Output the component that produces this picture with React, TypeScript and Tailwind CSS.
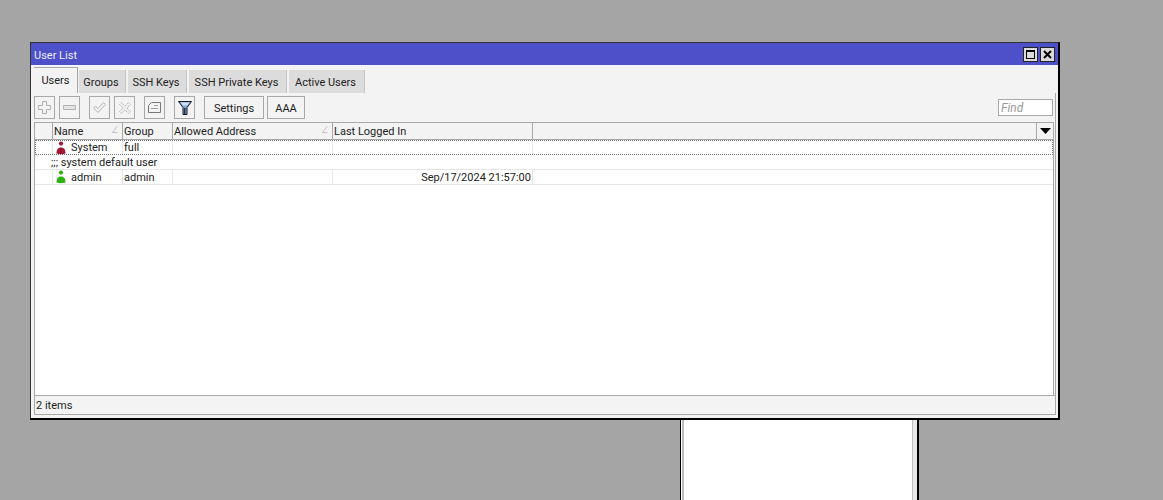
import React from "react";

const font = "font-['Roboto','Noto_Sans',sans-serif]";

const tabs = [
  { label: "Users", width: "w-[44px]", active: true },
  { label: "Groups", width: "w-[47px]" },
  { label: "SSH Keys", width: "w-[59px]" },
  { label: "SSH Private Keys", width: "w-[98px]" },
  { label: "Active Users", width: "w-[76px]" },
];

const UserIcon = ({ color }: { color: string }) => (
  <svg width="10" height="14" viewBox="0 0 10 14" className="shrink-0">
    <circle cx="5" cy="2.6" r="2.1" fill={color} />
    <path d="M0.5 12.5 C0.5 8 2.5 6.5 5 6.5 C7.5 6.5 9.5 8 9.5 12.5 Q5 14 0.5 12.5 Z" fill={color} />
  </svg>
);

const PlusIcon = () => (
  <svg width="13" height="13" viewBox="0 0 13 13" fill="#f3f3f3" stroke="#b0b0b0">
    <path d="M4.5 0.5h4v4h4v4h-4v4h-4v-4h-4v-4h4z" />
  </svg>
);

const MinusIcon = () => (
  <svg width="13" height="5" viewBox="0 0 13 5" fill="#e4e4e4" stroke="#b0b0b0">
    <path d="M0.5 0.5h12v4h-12z" />
  </svg>
);

const CheckIcon = () => (
  <svg width="13" height="11" viewBox="0 0 13 11" fill="#f3f3f3" stroke="#b4b4b4">
    <path d="M0.5 6l2-2 2.5 2.5 5.5-6 2 2-7.5 8z" />
  </svg>
);

const CrossIcon = () => (
  <svg width="12" height="12" viewBox="0 0 12 12" fill="#ededed" stroke="#b4b4b4" strokeDasharray="1.5 1">
    <path d="M2.5 0.5l3.5 3.5 3.5-3.5 2 2-3.5 3.5 3.5 3.5-2 2-3.5-3.5-3.5 3.5-2-2 3.5-3.5-3.5-3.5z" />
  </svg>
);

const NoteIcon = () => (
  <svg width="13" height="11" viewBox="0 0 13 11" fill="#f3f3f3" stroke="#777">
    <path d="M3.5 0.5h9v10h-12v-7z" />
    <path d="M6 3.5h4M3 6.5h7" stroke="#a0a0a0" />
  </svg>
);

const FilterIcon = () => (
  <svg width="14" height="14" viewBox="0 0 14 14">
    <path d="M0.5 0.5h13l-4.5 6v7h-4v-7z" fill="#7fa6d8" stroke="#1a1a2a" />
    <path d="M2.5 1.5h9l-2.5 3h-4z" fill="#cfe0f4" />
    <path d="M6 7h1.5v6h-1.5z" fill="#28334a" />
  </svg>
);

const iconButtons = [
  { icon: <PlusIcon />, cls: "" },
  { icon: <MinusIcon />, cls: "ml-[4px]" },
  { icon: <CheckIcon />, cls: "ml-[9px]" },
  { icon: <CrossIcon />, cls: "ml-[4px]" },
  { icon: <NoteIcon />, cls: "ml-[9px]" },
  { icon: <FilterIcon />, cls: "ml-[9px]" },
];

// widths include the right divider of each column
const columns = [
  { label: "", width: "w-[18px]" },
  { label: "Name", width: "w-[70px]", sort: true },
  { label: "Group", width: "w-[50px]" },
  { label: "Allowed Address", width: "w-[160px]", sort: true },
  { label: "Last Logged In", width: "w-[200px]" },
];

const SortMark = () => (
  <svg width="6" height="7" viewBox="0 0 6 7" className="absolute right-[4px] top-[3px]">
    <path d="M0 6.5h5.5M5 0.5L1 6" stroke="#c4c4c4" fill="none" />
  </svg>
);

const Cell = ({ width, right, children }: { width: string; right?: boolean; children?: React.ReactNode }) => (
  <div
    className={`${width} h-full shrink-0 border-r border-[#e6e6e6] flex items-center px-[1px] ${right ? "justify-end" : ""}`}
  >
    {children}
  </div>
);

const UserRow = ({
  name,
  group,
  color,
  lastLogin,
  selected,
}: {
  name: string;
  group: string;
  color: string;
  lastLogin?: string;
  selected?: boolean;
}) => (
  <div
    className={`flex h-[15px] ${
      selected ? "border border-dotted border-[#7a7a7a]" : "border-b border-[#e6e6e6]"
    }`}
  >
    <Cell width={selected ? "w-[17px]" : "w-[18px]"} />
    <Cell width="w-[70px]">
      <div className="flex items-center gap-[5px] pl-[2px]">
        <UserIcon color={color} />
        <span>{name}</span>
      </div>
    </Cell>
    <Cell width="w-[50px]">{group}</Cell>
    <Cell width="w-[160px]" />
    <Cell width="w-[200px]" right>
      {lastLogin}
    </Cell>
  </div>
);

export default function App() {
  return (
    <div className={`h-[500px] overflow-hidden bg-[#a5a5a5] pt-[42px] pl-[30px] text-[11px] leading-none text-[#222] ${font}`}>
      {/* User List window */}
      <div className="w-[1030px] h-[378px] border-t border-l border-[#333] border-r-2 border-b-2 border-r-black border-b-black bg-[#f3f3f3] flex flex-col">
        <div className="h-[22px] shrink-0 bg-[#4d50c8] border-t border-[#4d50c8] flex items-center justify-between pl-[3px] pr-[3px]">
          <span className="text-[#eef] pt-[1px]">User List</span>
          <div className="flex gap-[2px]">
            <button className="w-[15px] h-[15px] bg-[#dcdcdc] border border-[#222] flex items-center justify-center">
              <span className="block w-[9px] h-[9px] border border-black border-t-2" />
            </button>
            <button className="w-[15px] h-[15px] bg-[#dcdcdc] border border-[#222] flex items-center justify-center">
              <svg width="9" height="9" viewBox="0 0 9 9">
                <path d="M1 1l7 7M8 1l-7 7" stroke="#000" strokeWidth="2" />
              </svg>
            </button>
          </div>
        </div>

        <div className="flex-1 flex flex-col pl-[3px] pr-[2px]">
          {/* tabs */}
          <div className="flex items-end h-[28px] shrink-0 gap-[2px]">
            {tabs.map((t) => (
              <div
                key={t.label}
                className={`${t.width} flex items-center justify-center shrink-0 ${
                  t.active
                    ? "h-[26px] bg-[#f3f3f3] border-t border-r border-[#a8a8a8] -mr-[1px]"
                    : "h-[23px] bg-[#dcdcdc] border-r border-[#c4c4c4] pt-[1px] pr-[2px]"
                }`}
              >
                {t.label}
              </div>
            ))}
          </div>

          <div className="border-r border-[#a8a8a8]">
            {/* toolbar */}
            <div className="h-[29px] flex items-center pr-[2px]">
              {iconButtons.map((b, i) => (
                <button
                  key={i}
                  className={`w-[21px] h-[23px] border border-[#a8a8a8] bg-[#f3f3f3] flex items-center justify-center ${b.cls}`}
                >
                  {b.icon}
                </button>
              ))}
              <button className="ml-[9px] w-[60px] h-[23px] pt-[1px] border border-[#a8a8a8] bg-[#f3f3f3]">Settings</button>
              <button className="ml-[3px] w-[38px] h-[23px] pt-[1px] border border-[#a8a8a8] bg-[#f3f3f3]">AAA</button>
              <div className="ml-auto w-[55px] h-[17px] border border-[#a8a8a8] bg-white flex items-center pl-[2px] pt-[1px] italic text-[12px] text-[#9a9a9a]">
                Find
              </div>
            </div>

            {/* table */}
            <div className="h-[273px] mr-[1px] border-t border-l border-r border-[#a8a8a8] bg-white flex flex-col">
              <div className="h-[17px] flex bg-[#f3f3f3] border-b border-[#a8a8a8]">
                {columns.map((c) => (
                  <div
                    key={c.label}
                    className={`${c.width} relative h-full shrink-0 border-r border-[#a8a8a8] flex items-center px-[1px] pt-[1px]`}
                  >
                    {c.label}
                    {c.sort && <SortMark />}
                  </div>
                ))}
                <div className="flex-1 border-r border-[#a8a8a8]" />
                <div className="w-[16px] flex items-center justify-center">
                  <svg width="11" height="6" viewBox="0 0 11 6">
                    <path d="M0 0h11l-5.5 6z" fill="#000" />
                  </svg>
                </div>
              </div>
              <UserRow name="System" group="full" color="#a01830" selected />
              <div className="h-[15px] flex items-center pl-[16px] border-b border-[#e6e6e6]">;;; system default user</div>
              <UserRow name="admin" group="admin" color="#2fb010" lastLogin="Sep/17/2024 21:57:00" />
            </div>

            {/* status bar */}
            <div className="h-[20px] border-t border-b border-l border-[#a8a8a8] flex items-center pl-[1px]">2 items</div>
          </div>
        </div>
      </div>

      {/* window underneath */}
      <div className="ml-[650px] w-[239px] h-[100px] border-l border-r-2 border-black bg-white flex justify-between">
        <div className="w-[3px] border-r-2 border-[#bdbdbd] bg-white" />
        <div className="w-[5px] bg-[#e8e8e8] border-l border-[#bdbdbd]" />
      </div>
    </div>
  );
}
